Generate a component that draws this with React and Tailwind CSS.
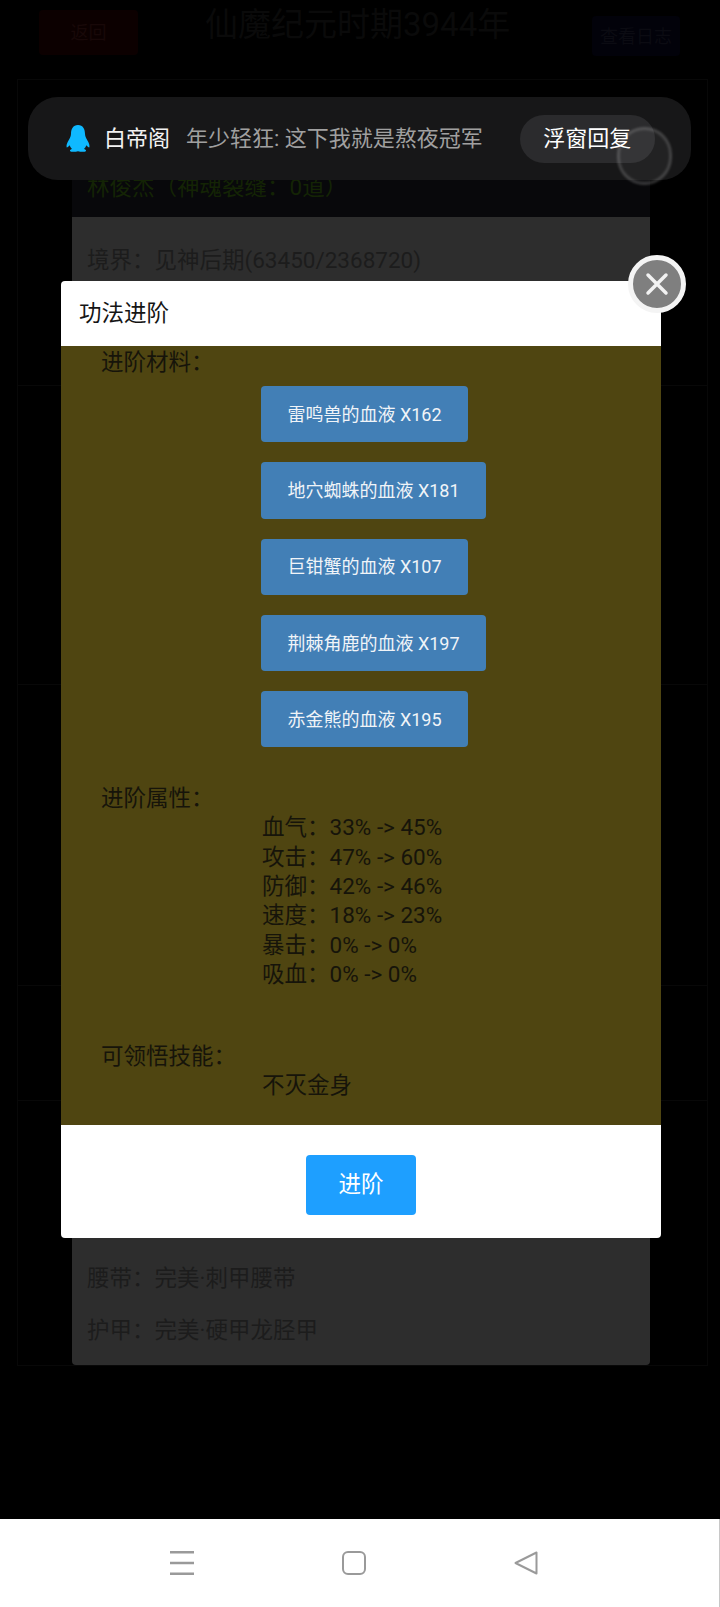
import React from "react";

const FONT = "font-['Roboto','Noto_Sans_CJK_SC',sans-serif]";

const materials = ["雷鸣兽的血液 X162", "地穴蜘蛛的血液 X181", "巨钳蟹的血液 X107", "荆棘角鹿的血液 X197", "赤金熊的血液 X195"];
const stats = [
  ["血气", "33% -> 45%"],
  ["攻击", "47% -> 60%"],
  ["防御", "42% -> 46%"],
  ["速度", "18% -> 23%"],
  ["暴击", "0% -> 0%"],
  ["吸血", "0% -> 0%"],
];

function Background() {
  return (
    <div className="flex h-[1519px] flex-col bg-black">
      <div className="flex h-[79px] items-start pl-[39px] pt-[10px]">
        <div className="flex h-[45px] w-[99px] items-center justify-center rounded bg-[#0c0000] text-[18px] text-[#180808]">返回</div>
        <div className="ml-[67px] w-[320px] text-[33px] leading-[30px] text-[#0a0a0a]">仙魔纪元时期3944年</div>
        <div className="ml-[67px] mt-[6px] flex h-[40px] w-[88px] items-center justify-center rounded bg-[#02020a] text-[18px] text-[#0b0b12]">查看日志</div>
      </div>
      <div className="ml-[17px] flex h-[1287px] w-[691px] flex-col border border-[#080808] text-[22.5px] text-[#1c1c1c]">
        <div className="flex h-[306px] flex-col border-b border-[#080808] pl-[54px] pr-[57px] pt-[98px]">
          <div className="h-[39px] bg-[#08080b] pl-[15px] leading-[18px] text-[#142405]">林俊杰（神魂裂缝：0道）</div>
          <div className="flex-1 bg-[#2d2d2d] pl-[15px] pt-[26px] leading-[34px]">境界：见神后期(63450/2368720)</div>
        </div>
        <div className="flex h-[299px] flex-col border-b border-[#080808] pl-[54px] pr-[57px]">
          <div className="flex-1 bg-[#2d2d2d]" />
        </div>
        <div className="flex h-[301px] flex-col border-b border-[#080808] pl-[54px] pr-[57px]">
          <div className="flex-1 bg-[#2d2d2d]" />
        </div>
        <div className="flex h-[115px] flex-col border-b border-[#080808] pl-[54px] pr-[57px]">
          <div className="flex-1 bg-[#2d2d2d]" />
        </div>
        <div className="flex h-[264px] flex-col pl-[54px] pr-[57px]">
          <div className="h-[266px] rounded-b bg-[#2d2d2d] pl-[15px] pt-[160px] leading-[34px]">
            <div>腰带：完美·刺甲腰带</div>
            <div className="mt-[18px]">护甲：完美·硬甲龙胫甲</div>
          </div>
        </div>
      </div>
    </div>
  );
}

function Notification() {
  return (
    <div className="absolute left-[28px] top-[97px] flex h-[83px] w-[663px] items-center rounded-[30px] bg-[#171718] pl-[38px]">
      <svg width="24" height="27" viewBox="0 0 24 27" className="shrink-0">
        <path fill="#0fb9ff" d="M12 0C7 0 5 4 5 9c0 3-1.800 5-3.300 8C.5 19.500.3 21.500.8 22.500c.8 0 2-1 2.800-2.200.5 1.500 1.300 2.700 2.400 3.600-1.500.4-2.300 1.200-1.900 2C4.800 27 9 27.200 12 26.200c3 1 7.200.8 7.900-.3.4-.8-.4-1.600-1.900-2 1.100-.9 1.900-2.100 2.400-3.600.8 1.200 2 2.200 2.800 2.200.5-1 .3-3-.9-5.500C20.800 14 19 12 19 9c0-5-2-9-7-9z" />
      </svg>
      <span className="ml-[14px] text-[22px] text-[#f2f2f2]">白帝阁</span>
      <span className="ml-[16px] text-[22px] text-[#a0a0a0]">年少轻狂: 这下我就是熬夜冠军</span>
      <div className="ml-[37px] flex h-[48px] w-[135px] items-center justify-center rounded-[24px] bg-[#2b2b2d] text-[22px] text-white">浮窗回复</div>
    </div>
  );
}

function Modal() {
  return (
    <div className="absolute left-[61px] top-[281px] w-[600px] rounded bg-white">
      <div className="flex h-[65px] items-center pl-[18px] text-[22.5px] text-[#151515]">功法进阶</div>
      <div className="flex h-[779px] flex-col bg-[#4f4511] pl-[40px] text-[22.5px] text-[#16140a]">
        <div className="pt-[1px] leading-[30px]">进阶材料：</div>
        <div className="ml-[160px] mt-[9px] flex flex-col items-start gap-[20px]">
          {materials.map((m) => (
            <div key={m} className="flex h-[56.3px] items-center rounded bg-[#427fb6] px-[26.5px] text-[18px] text-[#f0f4f8]">{m}</div>
          ))}
        </div>
        <div className="mt-[36px] leading-[30px]">进阶属性：</div>
        <div className="ml-[161px] flex flex-col">
          {stats.map(([k, v]) => (
            <div key={k} className="h-[29.3px] leading-[29.3px]">{k}：{v}</div>
          ))}
        </div>
        <div className="mt-[52px] leading-[30px]">可领悟技能：</div>
        <div className="ml-[161px] leading-[29px]">不灭金身</div>
      </div>
      <div className="flex h-[113px] items-start justify-center pt-[30px]">
        <div className="flex h-[60px] w-[110px] items-center justify-center rounded bg-[#1e9fff] text-[22.5px] text-white">进阶</div>
      </div>
    </div>
  );
}

function NavBar() {
  return (
    <div className="flex h-[88px] items-center justify-between border-r border-[#c8c8c8] bg-white pl-[170px] pr-[181px]">
      <svg width="24" height="24" viewBox="0 0 24 24" fill="none" stroke="#9a9a9a" strokeWidth="2.5">
        <path d="M0 1.300h24M0 12h24M0 22.700h24" />
      </svg>
      <svg width="24" height="24" viewBox="0 0 24 24" fill="none" stroke="#9a9a9a" strokeWidth="2">
        <rect x="1" y="1" width="22" height="22" rx="5" />
      </svg>
      <svg width="24" height="24" viewBox="0 0 24 24" fill="none" stroke="#9a9a9a" strokeWidth="2" strokeLinejoin="round">
        <path d="M22.500 1.500v21L1.500 12z" />
      </svg>
    </div>
  );
}

export default function App() {
  return (
    <div className={`relative h-[1607px] w-[720px] overflow-hidden bg-black ${FONT}`}>
      <Background />
      <NavBar />
      <Notification />
      <div className="absolute left-[617px] top-[127px] h-[58px] w-[55px] rounded-full border-[3px] border-white/15 bg-white/5 blur-[1px]" />
      <Modal />
      <div className="absolute left-[628px] top-[255px] flex h-[58px] w-[58px] items-center justify-center rounded-full border-[5px] border-[#f4f4f4] bg-[#7f7f7f]">
        <svg width="26" height="26" viewBox="0 0 26 26" stroke="#f2f2f2" strokeWidth="3.5" strokeLinecap="round">
          <path d="M4 4l18 18M22 4L4 22" />
        </svg>
      </div>
    </div>
  );
}
